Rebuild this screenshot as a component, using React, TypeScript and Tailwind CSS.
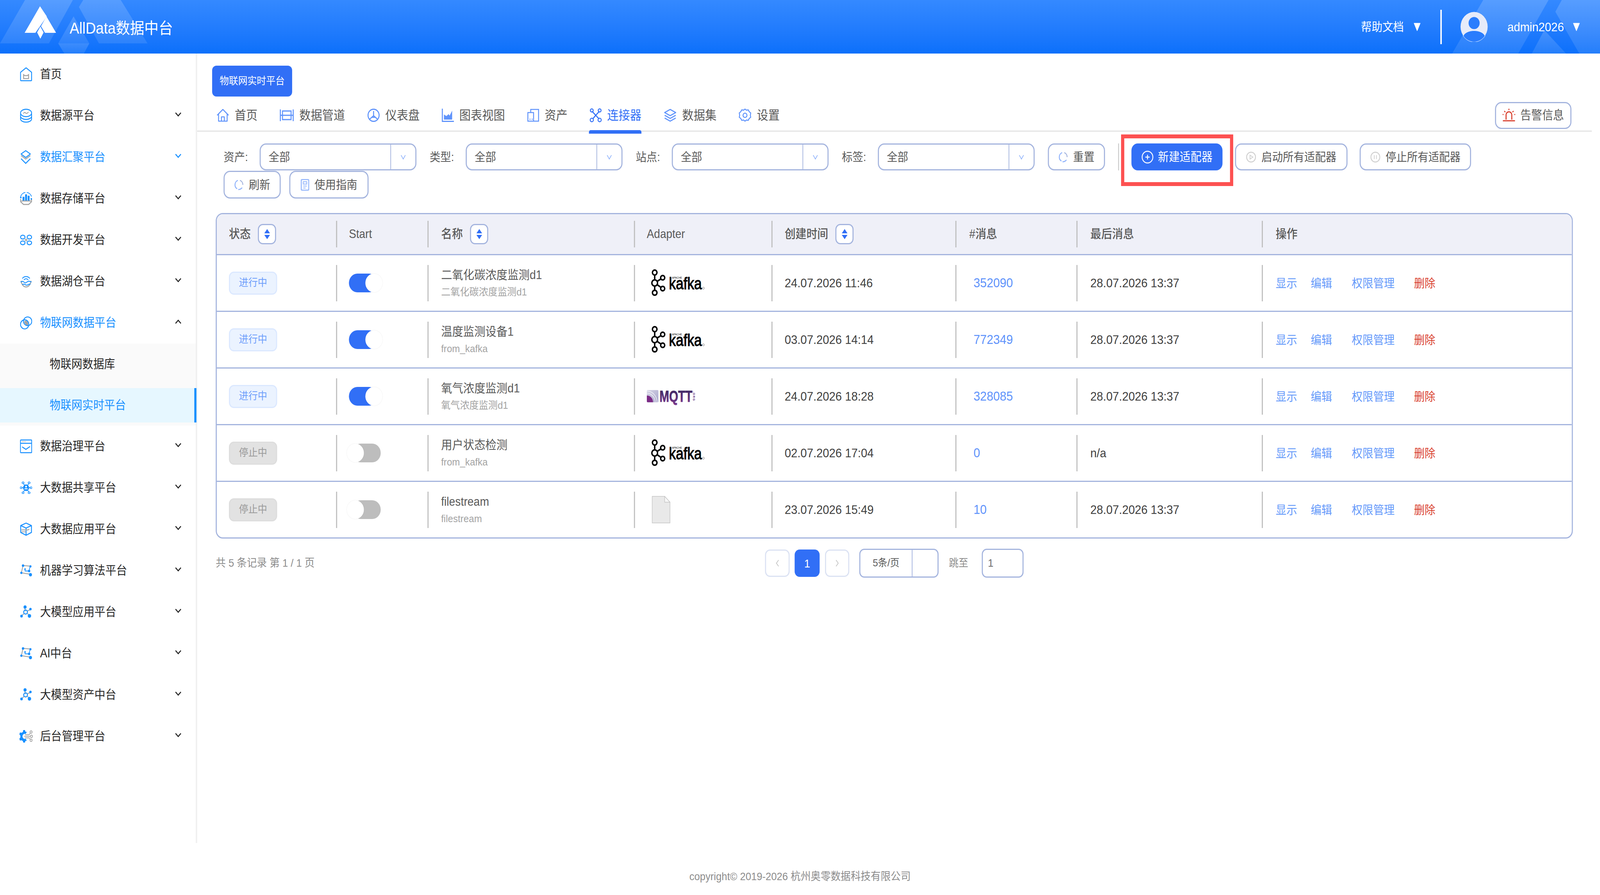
import type { ReactNode } from 'react';

const BLUE = '#1890ff';
const GRAY = '#a3a3a3';
const TAB = '#5f93fb';

function Svg({ w = 34, h = 36, box, children }: { w?: number; h?: number; box: string; children: ReactNode }) {
  return (
    <svg width={w} height={h} viewBox={box} fill="none" className="shrink-0">
      {children}
    </svg>
  );
}

// sidebar icons
const HomeIcon = () => (
  <Svg box="0 0 34 36">
    <path d="M17 1.500 32.500 13v20a1.500 1.500 0 0 1-1.500 1.500H3A1.500 1.500 0 0 1 1.500 33V13Z" stroke={BLUE} strokeWidth="2.400" strokeLinejoin="round" />
    <path d="M10 19l3.500 2.500h7L24 19v10H10Z" stroke={GRAY} strokeWidth="2.600" />
  </Svg>
);
const DbIcon = () => (
  <Svg box="0 0 34 36">
    <ellipse cx="17" cy="11" rx="15.500" ry="9.500" stroke={BLUE} strokeWidth="2.400" />
    <path d="M1.500 13v6c0 5 7 8.500 15.500 8.500S32.500 24 32.500 19v-6M1.500 20v6c0 5 7 8.500 15.500 8.500S32.500 31 32.500 26v-6" stroke={BLUE} strokeWidth="2.400" />
    <path d="M10 12c3-5 5-1 7 0s5-1 6-3" stroke={GRAY} strokeWidth="2.200" strokeLinecap="round" />
  </Svg>
);
const LayerIcon = () => (
  <Svg box="0 0 34 36">
    <path d="M16 1.500 29 10 16 19 3 10Z" stroke={BLUE} strokeWidth="2.400" strokeLinejoin="round" />
    <path d="m3 14 13 9 13-9" stroke={GRAY} strokeWidth="2.400" />
    <path d="m3 22 13 12 13-12" stroke={BLUE} strokeWidth="2.400" strokeLinejoin="round" />
  </Svg>
);
const StoreIcon = () => (
  <Svg box="0 0 38 38">
    <path d="M2 20v8l9 8h16l9-8v-8" stroke={GRAY} strokeWidth="3" />
    <path d="M4 26h30" stroke={GRAY} strokeWidth="3" />
    <path d="M8 14h6v11H8ZM16 7h6v18h-6ZM24 11h6v14h-6Z" fill={BLUE} />
    <path d="M17 1.500a17 17 0 0 0-15 12M21 1.500a17 17 0 0 1 15 12" stroke={BLUE} strokeWidth="2" />
    <circle cx="2.500" cy="16" r="2.500" fill={BLUE} />
    <circle cx="35.500" cy="20" r="2.500" fill={BLUE} />
  </Svg>
);
const DevIcon = () => (
  <Svg box="0 0 35 28">
    <ellipse cx="8" cy="6.500" rx="6.500" ry="5" stroke={BLUE} strokeWidth="2.600" />
    <ellipse cx="27" cy="6.500" rx="6.500" ry="5" stroke={BLUE} strokeWidth="2.600" />
    <ellipse cx="8" cy="21.500" rx="6.500" ry="5" stroke={BLUE} strokeWidth="2.600" />
    <ellipse cx="27" cy="21.500" rx="6.500" ry="5" stroke={BLUE} strokeWidth="2.600" />
    <path d="M17.500 10v8M13.500 14h8" stroke={GRAY} strokeWidth="2.400" />
  </Svg>
);
const LakeIcon = () => (
  <Svg box="0 0 37 36">
    <path d="M2 18h1.500c1.500 8 7 15.500 15 15.500s13.500-7.500 15-15.500H35" stroke={GRAY} strokeWidth="3" />
    <path d="M7 10a15 15 0 0 1 23 0M12 14a8 8 0 0 1 13 0" stroke={BLUE} strokeWidth="2.400" />
    <path d="M2 20c4-3 7-3 10 0s6 3 9 0 8-3 14 0M7 27c4-2 6-2 9 0s6 2 9 0 5-2 7-1" stroke={BLUE} strokeWidth="2.400" />
  </Svg>
);
const IotIcon = () => (
  <Svg box="0 0 35 36">
    <path d="M17 12c5 1 8 6 6 13-5 0-11-5-11-10 1-2 3-3 5-3Z" fill={GRAY} />
    <ellipse cx="13.500" cy="22" rx="12" ry="12" stroke={BLUE} strokeWidth="2.400" />
    <ellipse cx="22" cy="14" rx="12" ry="11.500" stroke={BLUE} strokeWidth="2.400" />
  </Svg>
);
const GovIcon = () => (
  <Svg box="0 0 35 36">
    <rect x="1.250" y="1.250" width="32.500" height="33.500" rx="1.500" stroke={BLUE} strokeWidth="2.400" />
    <path d="M2 10h31" stroke={BLUE} strokeWidth="2.400" />
    <path d="M6 5.500h2M10 5.500h2M14 5.500h2" stroke={GRAY} strokeWidth="2.400" />
    <path d="m7 20 10 6 11-7" stroke={BLUE} strokeWidth="2.600" strokeLinecap="round" />
  </Svg>
);
const ShareIcon = () => (
  <Svg box="0 0 36 34">
    <path d="M18 17 9 4M18 17l9-13M18 17 4 17M18 17h14M18 17 9 30M18 17l9 13" stroke={BLUE} strokeWidth="2" />
    <circle cx="18" cy="17" r="9" fill={BLUE} />
    <circle cx="18" cy="14" r="2.500" fill="#fff" />
    <path d="M12.500 21c1-4 10-4 11 0Z" fill="#fff" />
    {[[9, 3.500], [27, 3.500], [3, 17], [33, 17], [9, 30.500], [27, 30.500]].map(([x, y]) => (
      <ellipse key={`${x}-${y}`} cx={x} cy={y} rx="3" ry="2.300" fill="#fff" stroke={BLUE} strokeWidth="1.800" />
    ))}
  </Svg>
);
const BoxIcon = () => (
  <Svg box="0 0 35 36">
    <path d="M17.500 2 33 8.500v18L17.500 34 2 26.500v-18ZM2 8.500 17.500 15 33 8.500M17.500 15v19" stroke={BLUE} strokeWidth="2.600" strokeLinejoin="round" />
    <path d="M4 20h19l4-2M4 25h13" stroke={GRAY} strokeWidth="2.200" />
  </Svg>
);
const GraphIcon = () => (
  <Svg box="0 0 36 36">
    <path d="M9 4 4 24M9 4l22 2M4 24l28 4" stroke={GRAY} strokeWidth="2.400" />
    <path d="M30 6l-3 13M15 14v5h11" stroke={BLUE} strokeWidth="2" />
    <circle cx="9" cy="4.500" r="3.500" fill={BLUE} />
    <circle cx="31" cy="6.500" r="3" fill={BLUE} />
    <circle cx="4" cy="24" r="3.200" fill={BLUE} />
    <circle cx="31" cy="29" r="4.500" fill={BLUE} />
    <circle cx="27" cy="19" r="3.500" fill={BLUE} />
    <circle cx="15" cy="14" r="2.300" fill={BLUE} />
  </Svg>
);
const ModelIcon = () => (
  <Svg box="0 0 36 36">
    <path d="m16 16-2-9M22 15l10-4M12 22l-7 6M22 22l6 5" stroke={GRAY} strokeWidth="2.400" />
    <circle cx="15" cy="4.500" r="4.500" fill={BLUE} />
    <circle cx="31" cy="10" r="3.500" fill={BLUE} />
    <circle cx="4.500" cy="29" r="3.800" fill={BLUE} />
    <circle cx="28" cy="28.500" r="5" fill={BLUE} />
    <circle cx="16.500" cy="18" r="5.500" stroke={BLUE} strokeWidth="2.800" />
  </Svg>
);
const GearIcon = () => (
  <Svg w={38} h={36} box="0 0 38 36">
    <path d="M11 2h5l1 4 4 1-3 5c-5-2-9 2-9 6s4 8 9 6l3 5-4 1-1 4h-5l-1-4-4-2-4 1-2-5 3-3v-5l-3-3 2-5 4 1 4-2Z" fill={BLUE} />
    <path d="M16 14h12M14 18h16M16 22h12" stroke={GRAY} strokeWidth="1.800" />
    <circle cx="33" cy="7" r="3" stroke={GRAY} strokeWidth="1.800" />
    <circle cx="34" cy="18" r="3" stroke={GRAY} strokeWidth="1.800" />
    <circle cx="33" cy="28" r="3" stroke={GRAY} strokeWidth="1.800" />
    <path d="M28 14l3-5M28 22l3 4" stroke={GRAY} strokeWidth="1.800" />
  </Svg>
);

// tab icons
const tabIcons: Record<string, ReactNode> = {
  首页: (
    <Svg w={36} h={34} box="0 0 36 34">
      <path d="M2 17 18 2l16 15M6 14v18h24V14M14 32V21h8v11" stroke={TAB} strokeWidth="2.600" strokeLinejoin="round" />
    </Svg>
  ),
  数据管道: (
    <Svg w={40} h={30} box="0 0 40 30">
      <path d="M2 0v30M38 0v30M8 4h24v22H8ZM2 15h36" stroke={TAB} strokeWidth="2.800" />
    </Svg>
  ),
  仪表盘: (
    <Svg w={36} h={36} box="0 0 36 36">
      <circle cx="18" cy="18" r="15.500" stroke={TAB} strokeWidth="2.800" />
      <path d="M18 7v12M6 29l7-6h10l7 6M18 19l-5 4h10Z" stroke={TAB} strokeWidth="2.800" />
    </Svg>
  ),
  图表视图: (
    <Svg w={34} h={34} box="0 0 34 34">
      <path d="M1.500 0v32.500H34" stroke={TAB} strokeWidth="2.800" />
      <path d="M6 28V15l7 4 6-5 3 4 7-13v23Z" fill={TAB} />
    </Svg>
  ),
  资产: (
    <Svg w={34} h={34} box="0 0 34 34">
      <path d="M10 10V2h22v30H2V10h16v22" stroke={TAB} strokeWidth="2.600" />
      <circle cx="8" cy="27" r="1.500" fill={TAB} />
      <circle cx="14" cy="27" r="1.500" fill={TAB} />
    </Svg>
  ),
  连接器: (
    <Svg w={34} h={36} box="0 0 34 36">
      <path d="m7 8 10 10-8 9M27 8 17 18l9 9" stroke="#316ff6" strokeWidth="2.800" />
      <circle cx="6" cy="5.500" r="4" stroke="#316ff6" strokeWidth="2.600" />
      <circle cx="28" cy="5.500" r="4" stroke="#316ff6" strokeWidth="2.600" />
      <circle cx="6" cy="30" r="4.500" stroke="#316ff6" strokeWidth="2.600" />
      <circle cx="28" cy="30" r="4.500" stroke="#316ff6" strokeWidth="2.600" />
    </Svg>
  ),
  数据集: (
    <Svg w={37} h={34} box="0 0 37 34">
      <path d="M18.500 2 34 10l-15.500 8L3 10Z" stroke={TAB} strokeWidth="2.800" strokeLinejoin="round" />
      <path d="m3 17 15.500 8L34 17M3 24l15.500 8L34 24" stroke={TAB} strokeWidth="2.800" />
    </Svg>
  ),
  设置: (
    <Svg w={36} h={36} box="0 0 36 36">
      <path d="M18 2l4 3 5-1 3 5 4 3-1 6 1 5-4 3-3 5-5-1-4 3-4-3-5 1-3-5-4-3 1-5-1-6 4-3 3-5 5 1Z" stroke={TAB} strokeWidth="2.600" strokeLinejoin="round" />
      <circle cx="18" cy="18" r="5.500" stroke={TAB} strokeWidth="2.600" />
    </Svg>
  ),
};

const menu = [
  { label: '首页', icon: <HomeIcon />, plain: true },
  { label: '数据源平台', icon: <DbIcon /> },
  { label: '数据汇聚平台', icon: <LayerIcon />, blue: true, chevBlue: true },
  { label: '数据存储平台', icon: <StoreIcon /> },
  { label: '数据开发平台', icon: <DevIcon /> },
  { label: '数据湖仓平台', icon: <LakeIcon /> },
  { label: '物联网数据平台', icon: <IotIcon />, blue: true, open: true },
  { label: '数据治理平台', icon: <GovIcon /> },
  { label: '大数据共享平台', icon: <ShareIcon /> },
  { label: '大数据应用平台', icon: <BoxIcon /> },
  { label: '机器学习算法平台', icon: <GraphIcon /> },
  { label: '大模型应用平台', icon: <ModelIcon /> },
  { label: 'AI中台', icon: <GraphIcon /> },
  { label: '大模型资产中台', icon: <ModelIcon /> },
  { label: '后台管理平台', icon: <GearIcon /> },
];

const tabs = ['首页', '数据管道', '仪表盘', '图表视图', '资产', '连接器', '数据集', '设置'];

const rows = [
  { on: true, name: '二氧化碳浓度监测d1', sub: '二氧化碳浓度监测d1', adapter: 'kafka', created: '24.07.2026 11:46', count: '352090', last: '28.07.2026 13:37' },
  { on: true, name: '温度监测设备1', sub: 'from_kafka', adapter: 'kafka', created: '03.07.2026 14:14', count: '772349', last: '28.07.2026 13:37' },
  { on: true, name: '氧气浓度监测d1', sub: '氧气浓度监测d1', adapter: 'mqtt', created: '24.07.2026 18:28', count: '328085', last: '28.07.2026 13:37' },
  { on: false, name: '用户状态检测', sub: 'from_kafka', adapter: 'kafka', created: '02.07.2026 17:04', count: '0', last: 'n/a' },
  { on: false, name: 'filestream', sub: 'filestream', adapter: 'file', created: '23.07.2026 15:49', count: '10', last: '28.07.2026 13:37' },
];

function Chevron({ up, color }: { up?: boolean; color: string }) {
  return (
    <svg width="18" height="12" viewBox="0 0 18 12" fill="none" className="ml-auto mr-[40px] mb-[6px] shrink-0">
      <path d={up ? 'M1.500 10.500 9 2.500l7.500 8' : 'M1.500 1.500 9 9.500l7.500-8'} stroke={color} strokeWidth="2.600" />
    </svg>
  );
}

function Caret() {
  return (
    <svg width="20" height="22" viewBox="0 0 20 22" className="shrink-0">
      <path d="M1.500 1.500h17L10 20.500Z" fill="#fff" stroke="#fff" strokeWidth="1.500" strokeLinejoin="round" />
    </svg>
  );
}

function Select({ label }: { label: string }) {
  return (
    <div className="flex items-center">
      <span className="w-[101px] text-[30px] text-[#595959]">{label}:</span>
      <div className="flex h-[69px] w-[439px] items-center rounded-[18px] border-[3px] border-[#a4b4de] bg-white">
        <span className="flex-1 pl-[22px] text-[30px] text-[#595959]">全部</span>
        <span className="flex h-full w-[70px] items-center justify-center border-l-2 border-[#a4b4de]">
          <svg width="14" height="14" viewBox="0 0 14 14" fill="none">
            <path d="m1 2 6 10 6-10" stroke="#8fb2fb" strokeWidth="1.800" />
          </svg>
        </span>
      </div>
    </div>
  );
}

function Refresh() {
  return (
    <svg width="26" height="28" viewBox="0 0 26 28" fill="none" className="shrink-0">
      <path d="M16 2.500A12 12 0 0 1 24 14" stroke="#a4b4de" strokeWidth="2.600" />
      <path d="M10 2.500A12 12 0 0 0 2 14c0 4 2 8 6 10" stroke="#8fb2fb" strokeWidth="2.600" />
      <path d="M11 26c4 0 8-1 11-5" stroke="#8fb2fb" strokeWidth="2.600" />
    </svg>
  );
}

function OutlineBtn({ icon, text, className }: { icon: ReactNode; text: string; className: string }) {
  return (
    <button className={`flex items-center justify-center gap-[15px] rounded-[18px] border-[3px] border-[#a4b4de] bg-white text-[30px] text-[#595959] ${className}`}>
      {icon}
      {text}
    </button>
  );
}

function SortBtn() {
  return (
    <span className="flex h-[52px] w-[51px] items-center justify-center rounded-[14px] border-[3px] border-[#a4b4de] bg-white">
      <svg width="18" height="28" viewBox="0 0 18 28">
        <path d="M9 1l8 11H1ZM1 16h16L9 27Z" fill="#316ff6" />
      </svg>
    </span>
  );
}

function Toggle({ on }: { on: boolean }) {
  return (
    <div className={`relative h-[48px] w-[80px] rounded-full ${on ? 'bg-[#316ff6]' : 'ml-[9px] bg-[#bdbdbd]'}`}>
      <span className={`absolute top-0 h-[48px] w-[48px] rounded-full bg-white shadow-[0_0_2px_rgba(0,0,0,0.12)] ${on ? 'right-[-14px]' : 'left-[-15px]'}`} />
    </div>
  );
}

function Kafka() {
  return (
    <svg width="152" height="70" viewBox="0 0 455 210" className="ml-[11px] overflow-visible">
      <path d="M33 25v155M33 105l67-40M33 105l67 43" stroke="#000" strokeWidth="12" />
      <circle cx="33" cy="25" r="19" fill="#fff" stroke="#000" strokeWidth="12" />
      <circle cx="33" cy="105" r="24" fill="#fff" stroke="#000" strokeWidth="12" />
      <circle cx="100" cy="65" r="17" fill="#fff" stroke="#000" strokeWidth="12" />
      <circle cx="100" cy="148" r="17" fill="#fff" stroke="#000" strokeWidth="12" />
      <circle cx="33" cy="180" r="19" fill="#fff" stroke="#000" strokeWidth="12" />
      <text x="153" y="153" fontSize="125" fontFamily="Liberation Sans" stroke="#000" strokeWidth="4" textLength="275" lengthAdjust="spacingAndGlyphs">kafka</text>
      <text x="178" y="72" fontSize="19" fontFamily="Liberation Sans" textLength="85" lengthAdjust="spacingAndGlyphs">APACHE</text>
      <circle cx="442" cy="145" r="8" fill="none" stroke="#333" strokeWidth="2" />
    </svg>
  );
}

function Mqtt() {
  return (
    <svg width="137" height="32" viewBox="0 0 410 96" className="overflow-visible">
      <defs>
        <linearGradient id="mqttText" x1="0" y1="0" x2="0" y2="1">
          <stop offset="0" stopColor="#36265c" />
          <stop offset="1" stopColor="#7a3a8e" />
        </linearGradient>
        <linearGradient id="mqttBox" x1="0" y1="0" x2="1" y2="1">
          <stop offset="0" stopColor="#d5d5e6" />
          <stop offset="1" stopColor="#a9a6cb" />
        </linearGradient>
      </defs>
      <rect width="97" height="94" rx="7" fill="url(#mqttBox)" />
      <path d="M0 42a52 52 0 0 1 52 52H7a7 7 0 0 1-7-7Z" fill="#7b2b86" />
      <path d="M0 24a70 70 0 0 1 70 70M0 8a86 86 0 0 1 86 86" stroke="#f1f1f7" strokeWidth="5" fill="none" />
      <text x="106" y="90" fontSize="122" fontWeight="700" fontFamily="Liberation Sans" fill="url(#mqttText)" stroke="url(#mqttText)" strokeWidth="3" textLength="276" lengthAdjust="spacingAndGlyphs">MQTT</text>
      <text x="388" y="10" fontSize="22" fontWeight="700" fontFamily="Liberation Sans" fill="#5a2d7c" transform="rotate(90 388 10)" textLength="72">.ORG</text>
    </svg>
  );
}

function FileDoc() {
  return (
    <svg width="52" height="70" viewBox="0 0 52 70" className="ml-[14px]">
      <path d="M1 1h35l15 15v53H1Z" fill="#e9e9e9" stroke="#c4c4c4" strokeWidth="1.500" />
      <path d="M36 1v15h15Z" fill="#f7f7f7" stroke="#c4c4c4" strokeWidth="1.500" />
    </svg>
  );
}

export default function App() {
  // the browser's frame can be narrower than the 4480 design, squeeze to fit
  const fit = Math.min(1, window.innerWidth / 4480);
  return (
    <div className="h-[2290px] w-full overflow-hidden">
      <div
        className="flex h-[2290px] w-[4480px] origin-top-left flex-col overflow-hidden bg-white [font-family:'Liberation_Sans','Noto_Sans_CJK_SC',sans-serif]"
        style={{ transform: `scaleX(${fit})` }}
      >
        <header className="relative flex h-[137px] shrink-0 items-center justify-end bg-linear-to-b from-[#3489ff] to-[#0b70fb] pr-[56px] text-white">
          {/* backdrop shapes and logo */}
          <svg className="absolute left-0 top-0" width="4480" height="137" viewBox="0 0 4480 137">
            <defs>
              <linearGradient id="deco" x1="0" y1="0" x2="0" y2="1">
                <stop offset="0" stopColor="#fff" stopOpacity="0.17" />
                <stop offset="1" stopColor="#fff" stopOpacity="0.1" />
              </linearGradient>
            </defs>
            <g fill="url(#deco)">
              <path d="M70 0h134l-67 111H0Z" />
              <path d="M221 18 233 0h105l75 111H277Z" />
              <path d="M206 42l44 69H163Z" />
              <path d="M163 111h87l-15 26h-55Z" />
              <path d="M4153 0h183l-85 137H4066Z" />
              <path d="M4355 30 4373 0h107v137h-58Z" />
              <path d="M4324 77l61 60h-96Z" />
            </g>
            <g fill="#fff">
              <path d="M112 16l19 26-32 42H69Z" />
              <path d="M130 42l27 42h-31l-11-17Z" />
              <path d="M113 68l9 15-9 16-9-16Z" />
            </g>
          </svg>
          <span className="absolute left-[195px] top-[46px] text-[40px] leading-[52px]">AllData数据中台</span>
          <span className="relative text-[30px]">帮助文档</span>
          <span className="relative ml-[27px]"><Caret /></span>
          <span className="relative ml-[55px] h-[88px] w-[4px] bg-white" />
          <svg className="relative ml-[52px]" width="77" height="77" viewBox="0 0 77 77">
            <circle cx="38.500" cy="38.500" r="38" fill="#e6ebf9" />
            <circle cx="38.500" cy="29" r="15.500" fill="#2a7dfd" />
            <path d="M8 62c8-18 53-18 61 0a38 38 0 0 1-61 0Z" fill="#2a7dfd" stroke="#fff" strokeWidth="1" />
          </svg>
          <span className="relative ml-[55px] text-[32px]">admin2026</span>
          <span className="relative ml-[25px]"><Caret /></span>
        </header>

        <div className="flex h-[2020px]">
          <aside className="w-[552px] shrink-0 border-r-4 border-[#f0f0f0] text-[30.500px] text-[#262626]">
            {menu.map(m => (
              <div key={m.label}>
                <div className="flex h-[106px] items-center pl-[55px]">
                  <span className="flex w-[36px] shrink-0 justify-center">{m.icon}</span>
                  <span className={`ml-[21px] ${m.blue ? 'text-[#1890ff]' : ''}`}>{m.label}</span>
                  {!m.plain && <Chevron up={m.open} color={m.chevBlue ? BLUE : '#262626'} />}
                </div>
                {m.open && (
                  <div className="h-[210px] bg-[#fafafa] pt-[9px]">
                    <div className="flex h-[88px] items-center pl-[139px]">物联网数据库</div>
                    <div className="mt-[17px] -mr-[2px] flex h-[88px] items-center border-r-[6px] border-[#1890ff] bg-[#e6f7ff] pl-[139px] text-[#1890ff]">物联网实时平台</div>
                  </div>
                )}
              </div>
            ))}
          </aside>

          <main className="min-w-0 flex-1 pt-[31px]">
            <div className="ml-[42px] flex h-[79px] w-[224px] items-center justify-center rounded-[12px] bg-[#316ff6] text-[26px] text-white">物联网实时平台</div>

            <div className="mr-[23px] flex h-[90px] items-center border-b-[3px] border-[#e4e4e4] pl-[54px] pt-[9px]">
              <div className="flex items-center gap-[62px]">
                {tabs.map(t => (
                  <div key={t} className={`relative flex items-center gap-[15px] text-[32px] ${t === '连接器' ? 'text-[#316ff6]' : 'text-[#595959]'}`}>
                    {tabIcons[t]}
                    {t}
                    {t === '连接器' && <span className="absolute bottom-[-23px] left-[-2px] right-0 h-[9px] rounded-t-[5px] bg-[#316ff6]" />}
                  </div>
                ))}
              </div>
              <button className="ml-auto mr-[57px] flex h-[69px] w-[214px] items-center justify-center gap-[14px] rounded-[18px] border-[3px] border-[#a4b4de] bg-white text-[30.500px] text-[#595959]">
                <svg width="36" height="34" viewBox="0 0 36 34" fill="none" className="shrink-0">
                  <path d="M10 28V16a8 8 0 0 1 16 0v12M1 31h34" stroke="#d9412f" strokeWidth="3" />
                  <path d="M18 0v4M5 6l3 3M31 6l-3 3M0 15h3M33 15h3" stroke="#d9412f" strokeWidth="2.500" />
                </svg>
                告警信息
              </button>
            </div>

            <div className="ml-[74px] mt-[30px] flex items-center gap-[37px]">
              <Select label="资产" />
              <Select label="类型" />
              <Select label="站点" />
              <Select label="标签" />
              <OutlineBtn icon={<Refresh />} text="重置" className="h-[69px] w-[160px]" />
              <span className="h-[69px] w-[2px] bg-[#bdbdbd]" />
              <button className="relative -ml-[2px] flex h-[69px] w-[255px] items-center justify-center gap-[12px] rounded-[18px] bg-[#316ff6] text-[30.500px] text-white">
                <svg width="34" height="34" viewBox="0 0 34 34" fill="none" className="shrink-0">
                  <circle cx="17" cy="17" r="15" stroke="#fff" strokeWidth="2.400" />
                  <path d="M11 17h12M17 11v12" stroke="#fff" strokeWidth="2.400" />
                </svg>
                新建适配器
                {/* annotation box */}
                <span className="pointer-events-none absolute bottom-[-40px] left-[-29px] right-[-30px] top-[-23px] border-x-[9px] border-y-[10px] border-[#fd5151]" />
              </button>
              <OutlineBtn
                className="-ml-[2px] h-[69px] w-[315px]"
                text="启动所有适配器"
                icon={
                  <svg width="28" height="28" viewBox="0 0 28 28" fill="none" className="shrink-0">
                    <circle cx="14" cy="14" r="12.500" stroke="#cfcfcf" strokeWidth="2.400" />
                    <path d="m11 9 8 5-8 5Z" stroke="#cfcfcf" strokeWidth="2" />
                  </svg>
                }
              />
              <OutlineBtn
                className="-ml-[3px] h-[69px] w-[312px]"
                text="停止所有适配器"
                icon={
                  <svg width="28" height="28" viewBox="0 0 28 28" fill="none" className="shrink-0">
                    <circle cx="14" cy="14" r="12.500" stroke="#cfcfcf" strokeWidth="2.400" />
                    <path d="M11 9v10M17 9v10" stroke="#cfcfcf" strokeWidth="2" />
                  </svg>
                }
              />
            </div>
            <div className="ml-[74px] mt-px flex gap-[24px]">
              <OutlineBtn icon={<Refresh />} text="刷新" className="h-[71px] w-[160px]" />
              <OutlineBtn
                className="h-[71px] w-[222px]"
                text="使用指南"
                icon={
                  <svg width="24" height="30" viewBox="0 0 24 30" fill="none" className="shrink-0">
                    <rect x="1.500" y="1.500" width="21" height="27" rx="2" stroke="#8fb2fb" strokeWidth="2.600" />
                    <path d="M7 7h10v6H7Z" stroke="#8fb2fb" strokeWidth="2" />
                    <path d="M7 18h10M7 23h7" stroke="#8fb2fb" strokeWidth="2" />
                  </svg>
                }
              />
            </div>

            <div className="ml-[52px] mt-[37px] w-[3800px] overflow-hidden rounded-[20px] border-[3px] border-[#a4b4de]">
              <div className="grid h-[105px] grid-cols-[334px_256px_578px_385px_515px_339px_519px_868px] items-center border-b-[3px] border-[#a4b4de] bg-[#eff0f8] text-[30.500px] font-medium text-[#595959]">
                <div className="flex h-[68px] items-center gap-[20px] pl-[34px]">状态<SortBtn /></div>
                <div className="flex h-[68px] items-center border-l-[3px] border-[#bdbdbd] pl-[33px]">Start</div>
                <div className="flex h-[68px] items-center gap-[20px] border-l-[3px] border-[#bdbdbd] pl-[35px]">名称<SortBtn /></div>
                <div className="flex h-[68px] items-center border-l-[3px] border-[#bdbdbd] pl-[33px]">Adapter</div>
                <div className="flex h-[68px] items-center gap-[20px] border-l-[3px] border-[#bdbdbd] pl-[34px]">创建时间<SortBtn /></div>
                <div className="flex h-[68px] items-center border-l-[3px] border-[#bdbdbd] pl-[36px]">#消息</div>
                <div className="flex h-[68px] items-center border-l-[3px] border-[#bdbdbd] pl-[36px]">最后消息</div>
                <div className="flex h-[68px] items-center border-l-[3px] border-[#bdbdbd] pl-[36px]">操作</div>
              </div>

              {rows.map((r, i) => (
                <div
                  key={r.name}
                  className={`grid grid-cols-[334px_256px_578px_385px_515px_339px_519px_868px] items-center ${i < rows.length - 1 ? 'h-[145px] border-b-[3px] border-[#a4b4de]' : 'h-[142px]'}`}
                >
                  <div className="flex h-[93px] items-center pl-[34px]">
                    <span className={`flex h-[59px] w-[135px] items-center justify-center rounded-[14px] border-[3px] text-[26.400px] ${r.on ? 'border-[#dbe8ff] bg-[#ebf3ff] text-[#6f9ffb]' : 'border-[#dddddd] bg-[#e2e2e2] text-[#9b9b9b]'}`}>
                      {r.on ? '进行中' : '停止中'}
                    </span>
                  </div>
                  <div className="flex h-[93px] items-center border-l-[3px] border-[#bdbdbd] pl-[33px]">
                    <Toggle on={r.on} />
                  </div>
                  <div className="flex h-[93px] flex-col justify-center border-l-[3px] border-[#bdbdbd] pl-[35px]">
                    <span className="text-[31px] leading-[42px] text-[#595959]">{r.name}</span>
                    <span className="mt-[4px] text-[26.400px] leading-[36px] text-[#a3a3a3]">{r.sub}</span>
                  </div>
                  <div className="flex h-[93px] items-center border-l-[3px] border-[#bdbdbd] pl-[33px]">
                    {r.adapter === 'kafka' && <Kafka />}
                    {r.adapter === 'mqtt' && <Mqtt />}
                    {r.adapter === 'file' && <FileDoc />}
                  </div>
                  <div className="flex h-[93px] items-center border-l-[3px] border-[#bdbdbd] pl-[34px] text-[32px] text-[#404040]">{r.created}</div>
                  <div className="flex h-[93px] items-center border-l-[3px] border-[#bdbdbd] pl-[48px] text-[33px] text-[#5f93fb]">{r.count}</div>
                  <div className="flex h-[93px] items-center border-l-[3px] border-[#bdbdbd] pl-[36px] text-[32px] text-[#404040]">{r.last}</div>
                  <div className="flex h-[93px] items-center border-l-[3px] border-[#bdbdbd] pl-[36px] text-[30px]">
                    <span className="text-[#6499fa]">显示</span>
                    <span className="ml-[38px] text-[#6499fa]">编辑</span>
                    <span className="ml-[55px] text-[#6499fa]">权限管理</span>
                    <span className="ml-[54px] text-[#d9412f]">删除</span>
                  </div>
                </div>
              ))}
            </div>

            <div className="ml-[52px] mt-[26px] flex h-[74px] items-center">
              <span className="w-[1538px] text-[28px] text-[#8c8c8c]">共 5 条记录 第 1 / 1 页</span>
              <span className="flex h-[70px] w-[69px] items-center justify-center rounded-[14px] border-[3px] border-[#dbe2f3] bg-white">
                <svg width="10" height="18" viewBox="0 0 10 18" fill="none"><path d="M8 1 2 9l6 8" stroke="#c4c4c4" strokeWidth="2" /></svg>
              </span>
              <span className="ml-[14px] flex h-[70px] w-[70px] items-center justify-center rounded-[14px] bg-[#316ff6] text-[30px] text-white">1</span>
              <span className="ml-[15px] flex h-[70px] w-[68px] items-center justify-center rounded-[14px] border-[3px] border-[#dbe2f3] bg-white">
                <svg width="10" height="18" viewBox="0 0 10 18" fill="none"><path d="m2 1 6 8-6 8" stroke="#c4c4c4" strokeWidth="2" /></svg>
              </span>
              <span className="ml-[28px] flex h-[74px] w-[222px] items-center rounded-[14px] border-[3px] border-[#a4b4de] text-[26.400px] text-[#595959]">
                <span className="flex h-full w-[146px] items-center justify-center border-r-2 border-[#a4b4de]">5条/页</span>
              </span>
              <span className="ml-[29px] text-[27px] text-[#8c8c8c]">跳至</span>
              <span className="ml-[38px] flex h-[74px] w-[117px] items-center rounded-[14px] border-[3px] border-[#a4b4de] pl-[14px] text-[28px] text-[#6b6b6b]">1</span>
            </div>
          </main>
        </div>

        <footer className="flex flex-1 items-center justify-center pt-[39px] text-[28px] text-[#8c8c8c]">copyright© 2019-2026 杭州奥零数据科技有限公司</footer>
      </div>
    </div>
  );
}
